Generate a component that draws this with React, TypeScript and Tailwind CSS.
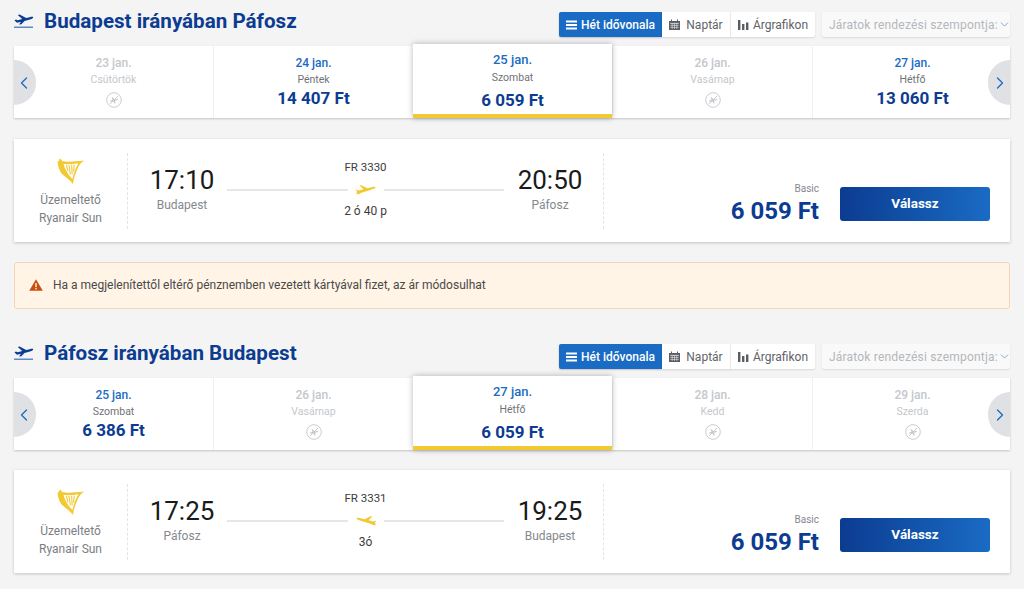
import React from 'react';
import { ChevronLeft, ChevronRight, ChevronDown } from 'lucide-react';

interface DayProps {
  date: string;
  day: string;
  price?: string;
  selected?: boolean;
}

const PlanePath = 'M0 4.5 L1.5 6.5 L0.8 9.2 L3 9.2 L6 7.8 L15 5 C18 4 20.4 3 20 2.2 C19.6 1.4 17 1.8 15 2.4 L12 3.2 L5.8 0.2 L4 0.6 L8 4.2 L3.5 5.4 Z';

const TakeoffIcon = () => (
  <svg width="20" height="16" viewBox="0 0 20 16" className="shrink-0">
    <path d="M0.5 7.4 L3 9.8 L7 8.8 L5 11.6 L7.4 11.2 L10.5 7.9 L16 6.4 C18 5.8 19.4 5 19.2 4.2 C19 3.5 17.4 3.7 15.6 4.2 L12.2 5.1 L5.6 1.4 L3.8 2 L8.2 6 L3.8 7.2 L1.8 6.6 Z" fill="#0c3c91" />
    <rect x="0" y="13.6" width="19" height="1.2" fill="#3f6db8" />
  </svg>
);

const NoFlightIcon = () => (
  <svg width="16" height="16" viewBox="0 0 16 16" className="mt-[5px]">
    <circle cx="8" cy="8" r="7.3" fill="none" stroke="#c9ccd1" strokeWidth="1" />
    <path d="M4 8.6 L6.6 8 L5.6 5.4 L6.6 5.2 L8.6 7.6 L10.8 7 C11.6 6.8 12.2 6.9 12.2 7.3 C12.2 7.7 11.6 8 10.8 8.2 L9 8.8 L9.6 11.2 L8.6 11.4 L7.2 9.2 L4.6 9.8 Z" fill="#c4c7cc" />
    <path d="M4 12 L12 4" stroke="#c9ccd1" strokeWidth="1" />
  </svg>
);

const HarpLogo = () => (
  <svg width="28" height="27" viewBox="0 0 28 27">
    <path d="M0.5 3.8 C2 3.2 2.6 2.4 2.4 0.8 C3.6 0.4 4.6 1.4 5 3 C10 4.4 17 3.8 27.5 2.6 C24 4.6 22 7 20.4 11 C18.6 15.6 16.6 20 16 26 C13 21.6 8 19 4.6 15.4 C2.2 12.8 1 8 0.5 3.8 Z" fill="#f1c933" />
    <path d="M6.6 6 C8 12 11.2 16.6 15.4 21 C16.6 15.8 18.4 10 21.4 5.2 C16.4 6 11 6.4 6.6 6 Z" fill="#ffffff" />
    <path d="M9.4 7 L11 13.4 M12 7 L13.4 16.4 M14.6 6.8 L15.2 16.4 M17.2 6.6 L16.6 13.6" stroke="#f1c933" strokeWidth="1.1" fill="none" />
  </svg>
);

const CalendarIcon = () => (
  <svg width="11" height="11" viewBox="0 0 11 11">
    <path d="M0 2 H2 V0.5 H3 V2 H8 V0.5 H9 V2 H11 V11 H0 Z" fill="#5a5d63" />
    <path d="M1.2 4.4 H9.8" stroke="#fff" strokeWidth="0.7" />
    <path d="M1.2 6.4 H9.8 M1.2 8.4 H9.8 M3.2 4.4 V10 M5.5 4.4 V10 M7.8 4.4 V10" stroke="#fff" strokeWidth="0.5" />
  </svg>
);

const ChartIcon = () => (
  <svg width="11" height="11" viewBox="0 0 11 11" fill="#5a5d63">
    <rect x="0" y="1" width="2.4" height="10" />
    <rect x="4" y="5" width="2.4" height="6" />
    <rect x="8" y="3.5" width="2.4" height="7.5" />
  </svg>
);

const ListIcon = () => (
  <svg width="12" height="10" viewBox="0 0 12 10" fill="#ffffff">
    <rect x="0" y="0.5" width="11" height="2" />
    <rect x="0" y="4" width="11" height="2" />
    <rect x="0" y="7.5" width="11" height="2" />
  </svg>
);

const WarningIcon = () => (
  <svg width="14" height="12" viewBox="0 0 14 12" className="shrink-0">
    <path d="M7 0.3 L13.8 11.7 H0.2 Z" fill="#c8500f" />
    <rect x="6.3" y="4" width="1.4" height="4.2" fill="#fff3e6" />
    <rect x="6.3" y="9" width="1.4" height="1.4" fill="#fff3e6" />
  </svg>
);

const DayCell: React.FC<DayProps> = ({ date, day, price, selected }) => {
  if (selected) {
    return (
      <div className="relative z-10 -mt-[2px] flex h-[74px] w-[199px] shrink-0 flex-col items-center border-b-[4px] border-[#f1c933] bg-white pt-[8px] shadow-[0_0_6px_rgba(0,0,0,0.28)]">
        <div className="text-[13px] leading-[16px] font-medium text-[#1a6bc4]">{date}</div>
        <div className="mt-[3px] text-[10.5px] leading-[14px] text-[#6f7378]">{day}</div>
        <div className="mt-[3px] text-[17px] leading-[24px] font-bold text-[#0c3c91]">{price}</div>
      </div>
    );
  }
  return (
    <div className="flex w-[200px] shrink-0 flex-col items-center border-l border-[#f0f0f0] pt-[9px] first:w-[199px] first:border-l-0 last:w-[198px]">
      <div className={`text-[12px] leading-[16px] font-medium ${price ? 'text-[#1a6bc4]' : 'text-[#c4c7cc]'}`}>{date}</div>
      <div className={`mt-[2px] text-[10.5px] leading-[14px] ${price ? 'text-[#6f7378]' : 'text-[#c4c7cc]'}`}>{day}</div>
      {price ? (
        <div className="-mt-[1px] text-[17px] leading-[24px] font-bold text-[#0c3c91]">{price}</div>
      ) : (
        <NoFlightIcon />
      )}
    </div>
  );
};

const DateBar: React.FC<{ days: DayProps[] }> = ({ days }) => (
  <div className="relative flex h-[72px] bg-white shadow-[0_1px_2px_rgba(0,0,0,0.2)]">
    {days.map((d) => (
      <DayCell key={d.date} {...d} />
    ))}
    <div className="absolute top-[14px] left-0 flex h-[45px] w-[22px] items-center rounded-r-full bg-[#dfe1e4]">
      <ChevronLeft size={20} strokeWidth={1.5} className="text-[#1a6bc4]" />
    </div>
    <div className="absolute top-[14px] right-0 flex h-[45px] w-[22px] items-center justify-end rounded-l-full bg-[#dfe1e4]">
      <ChevronRight size={20} strokeWidth={1.5} className="text-[#1a6bc4]" />
    </div>
  </div>
);

const SectionHeader: React.FC<{ title: string }> = ({ title }) => (
  <div className="mb-[9px] flex h-[25px] items-center">
    <div className="mb-[7px] flex items-center gap-[10px]">
      <TakeoffIcon />
      <h2 className="text-[20.6px] leading-[24px] font-bold text-[#0c3c91]">{title}</h2>
    </div>
    <div className="ml-auto flex items-center">
      <div className="flex h-[25px] w-[103px] items-center justify-center gap-[3px] rounded-l-[2px] bg-[#1a6bc4] text-[12px] font-medium text-white shadow-[0_1px_2px_rgba(0,0,0,0.2)]">
        <ListIcon />
        <span>Hét idővonala</span>
      </div>
      <div className="flex h-[25px] w-[69px] items-center justify-center gap-[6px] border-r border-[#f0f0f0] bg-white text-[12px] text-[#5f6368] shadow-[0_1px_2px_rgba(0,0,0,0.12)]">
        <CalendarIcon />
        <span>Naptár</span>
      </div>
      <div className="flex h-[25px] w-[84px] items-center justify-center gap-[4px] rounded-r-[2px] bg-white text-[12px] text-[#5f6368] shadow-[0_1px_2px_rgba(0,0,0,0.12)]">
        <ChartIcon />
        <span>Árgrafikon</span>
      </div>
      <div className="ml-[7px] flex h-[25px] w-[188px] items-center justify-between rounded-[2px] bg-[#f9f9f9] pr-[4px] pl-[7px] text-[12px] tracking-[0.2px] whitespace-nowrap text-[#b4b7bb] shadow-[0_1px_2px_rgba(0,0,0,0.1)]">
        <span>Járatok rendezési szempontja:</span>
        <ChevronDown size={13} strokeWidth={1.6} className="shrink-0 text-[#6b9ed8]" />
      </div>
    </div>
  </div>
);

const FlightCard: React.FC<{
  flightNo: string;
  from: string;
  to: string;
  dep: string;
  arr: string;
  duration: string;
  inbound?: boolean;
}> = ({ flightNo, from, to, dep, arr, duration, inbound }) => (
  <div className="flex h-[103px] items-center bg-white shadow-[0_1px_3px_rgba(0,0,0,0.2)]">
    <div className="flex h-[76px] w-[114px] shrink-0 flex-col items-center border-r border-dashed border-[#e4e4e4] pt-[5px] text-[12px] leading-[18px] text-[#7b7e84]">
      <HarpLogo />
      <div className="mt-[6px]">Üzemeltető</div>
      <div>Ryanair Sun</div>
    </div>
    <div className="flex h-[76px] w-[476px] shrink-0 items-start border-r border-dashed border-[#e4e4e4]">
      <div className="flex w-[99px] shrink-0 flex-col items-center pt-[12px] pl-[9px]">
        <div className="text-[26px] leading-[30px] text-[#1a1a1a]">{dep}</div>
        <div className="mt-[3px] text-[12px] leading-[14px] text-[#85888d]">{from}</div>
      </div>
      <div className="flex w-[277px] shrink-0 flex-col items-center pt-[7px]">
        <div className="text-[11.5px] leading-[14px] text-[#3c3c3c]">{flightNo}</div>
        <div className="mt-[7px] flex h-[18px] w-full items-center gap-[7px]">
          <div className="h-[2px] flex-1 bg-[#e4e6e8]" />
          <svg width="22" height="10" viewBox="0 0 21 10" className={`shrink-0 ${inbound ? '-scale-x-100' : ''}`}>
            <path d={PlanePath} fill="#f1c933" />
          </svg>
          <div className="h-[2px] flex-1 bg-[#e4e6e8]" />
        </div>
        <div className="mt-[5px] text-[12px] leading-[14px] text-[#3c3c3c]">{duration}</div>
      </div>
      <div className="flex w-[92px] shrink-0 flex-col items-center pt-[12px]">
        <div className="text-[26px] leading-[30px] text-[#1a1a1a]">{arr}</div>
        <div className="mt-[3px] text-[12px] leading-[14px] text-[#85888d]">{to}</div>
      </div>
    </div>
    <div className="mb-[16px] flex flex-1 flex-col items-end self-end pr-[21px]">
      <div className="text-[10px] leading-[12px] text-[#85888d]">Basic</div>
      <div className="mt-[1px] text-[24px] leading-[30px] font-bold text-[#0c3c91]">6 059 Ft</div>
    </div>
    <div className="mr-[20px] mb-[21px] flex h-[34px] w-[150px] shrink-0 items-center justify-center self-end rounded-[3px] bg-gradient-to-r from-[#0c3c91] to-[#1a6bc4] pb-[1px] text-[13.5px] font-bold text-white">
      Válassz
    </div>
  </div>
);

export default function App() {
  return (
    <div className="h-[589px] w-[1024px] overflow-hidden bg-[#f4f4f4] px-[14px] pt-[12px] font-['Roboto',sans-serif]">
      <SectionHeader title="Budapest irányában Páfosz" />
      <DateBar
        days={[
          { date: '23 jan.', day: 'Csütörtök' },
          { date: '24 jan.', day: 'Péntek', price: '14 407 Ft' },
          { date: '25 jan.', day: 'Szombat', price: '6 059 Ft', selected: true },
          { date: '26 jan.', day: 'Vasárnap' },
          { date: '27 jan.', day: 'Hétfő', price: '13 060 Ft' },
        ]}
      />
      <div className="mt-[21px]">
        <FlightCard flightNo="FR 3330" from="Budapest" to="Páfosz" dep="17:10" arr="20:50" duration="2 ó 40 p" />
      </div>
      <div className="mt-[20px] flex h-[47px] items-center gap-[10px] rounded-[3px] border border-[#f5d5b5] bg-[#fff4e6] pb-[1px] pl-[14px] text-[12px] text-[#4a4a4a]">
        <WarningIcon />
        <span>Ha a megjelenítettől eltérő pénznemben vezetett kártyával fizet, az ár módosulhat</span>
      </div>
      <div className="mt-[35px]">
        <SectionHeader title="Páfosz irányában Budapest" />
      </div>
      <DateBar
        days={[
          { date: '25 jan.', day: 'Szombat', price: '6 386 Ft' },
          { date: '26 jan.', day: 'Vasárnap' },
          { date: '27 jan.', day: 'Hétfő', price: '6 059 Ft', selected: true },
          { date: '28 jan.', day: 'Kedd' },
          { date: '29 jan.', day: 'Szerda' },
        ]}
      />
      <div className="mt-[20px]">
        <FlightCard flightNo="FR 3331" from="Páfosz" to="Budapest" dep="17:25" arr="19:25" duration="3ó" inbound />
      </div>
    </div>
  );
}
